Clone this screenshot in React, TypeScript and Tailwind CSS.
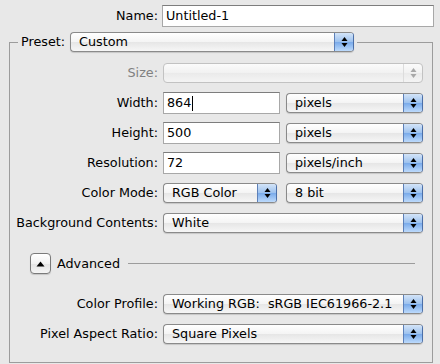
import React from 'react';

const Arrows = ({ color = '#000' }: { color?: string }) => (
  <svg width="7" height="12" viewBox="0 0 7 12">
    <path d="M3.5 1 L6.5 5 L0.5 5 Z" fill={color} />
    <path d="M0.5 7 L6.5 7 L3.5 11 Z" fill={color} />
  </svg>
);

interface PopupProps {
  value: string;
  width: string;
  disabled?: boolean;
}

const Popup: React.FC<PopupProps> = ({ value, width, disabled }) => {
  if (disabled) {
    return (
      <div
        className={`${width} h-[20px] flex items-center rounded-[4px] border border-[#c2c2c2] bg-[linear-gradient(to_bottom,#fbfbfb_0%,#f1f1f1_50%,#eaeaea_51%,#f4f4f4_100%)]`}
      >
        <span className="flex-1" />
        <div className="w-[19px] h-full flex items-center justify-center border-l border-[#dcdcdc]">
          <Arrows color="#a8a8a8" />
        </div>
      </div>
    );
  }
  return (
    <div
      className={`${width} h-[20px] flex items-center rounded-[4px] border border-[#8a8a8a] border-r-[#4b6fa8] overflow-hidden shadow-[0_1px_1px_rgba(0,0,0,0.15)] bg-[linear-gradient(to_bottom,#ffffff_0%,#f4f4f4_50%,#e6e6e6_51%,#f6f6f6_100%)]`}
    >
      <span className="flex-1 pl-[8px] text-black whitespace-pre overflow-hidden">{value}</span>
      <div className="w-[19px] h-full flex items-center justify-center border-l border-[#5d80b8] bg-[linear-gradient(to_bottom,#d3e4f8_0%,#9cc1ee_50%,#79aaea_51%,#bcdafc_100%)]">
        <Arrows />
      </div>
    </div>
  );
};

const Field = ({ value, width, caret }: { value: string; width: string; caret?: boolean }) => (
  <div
    className={`${width} h-[22px] flex items-center bg-white border border-[#a8a8a8] border-t-[#7d7d7d] pl-[3px] text-black`}
  >
    <span>{value}</span>
    {caret && <span className="w-[1px] h-[15px] bg-black ml-[1px]" />}
  </div>
);

const Row = ({ label, children, dim }: { label: string; children: React.ReactNode; dim?: boolean }) => (
  <div className="flex items-center h-[30px]">
    <div className={`w-[148px] text-right whitespace-nowrap ${dim ? 'text-[#808080]' : 'text-black'}`}>{label}</div>
    <div className="ml-[5px] w-[260px] flex items-center">{children}</div>
  </div>
);

export default function App() {
  return (
    <div className="w-[440px] h-[364px] bg-[#e8e8e8] overflow-hidden font-['DejaVu_Sans',sans-serif] text-[12.75px] text-black">
      {/* Name */}
      <div className="flex items-center h-[23px] mt-[4px]">
        <div className="w-[158px] text-right">Name:</div>
        <div className="ml-[4px]">
          <Field value="Untitled-1" width="w-[272px]" />
        </div>
      </div>

      {/* Preset group */}
      <fieldset className="mt-[5px] ml-[9px] w-[424px] border border-[#9c9c9c] pt-[6px] pb-[13px]">
        <legend className="ml-[8px] px-[3px]">
          <div className="flex items-center h-[20px]">
            <span>Preset:</span>
            <div className="ml-[5px]">
              <Popup value="Custom" width="w-[284px]" />
            </div>
          </div>
        </legend>

        <Row label="Size:" dim>
          <Popup value="" width="w-[260px]" disabled />
        </Row>
        <Row label="Width:">
          <Field value="864" width="w-[117px]" caret />
          <div className="ml-[6px]">
            <Popup value="pixels" width="w-[137px]" />
          </div>
        </Row>
        <Row label="Height:">
          <Field value="500" width="w-[117px]" />
          <div className="ml-[6px]">
            <Popup value="pixels" width="w-[137px]" />
          </div>
        </Row>
        <Row label="Resolution:">
          <Field value="72" width="w-[117px]" />
          <div className="ml-[6px]">
            <Popup value="pixels/inch" width="w-[137px]" />
          </div>
        </Row>
        <Row label="Color Mode:">
          <Popup value="RGB Color" width="w-[114px]" />
          <div className="ml-[9px]">
            <Popup value="8 bit" width="w-[137px]" />
          </div>
        </Row>
        <Row label="Background Contents:">
          <Popup value="White" width="w-[260px]" />
        </Row>

        {/* Advanced */}
        <div className="flex items-center h-[51px] ml-[20px] mr-[17px]">
          <div className="w-[21px] h-[21px] rounded-[4px] border border-[#7a7a7a] flex items-center justify-center shadow-[0_1px_1px_rgba(0,0,0,0.15)] bg-[linear-gradient(to_bottom,#ffffff_0%,#f2f2f2_50%,#e4e4e4_51%,#f5f5f5_100%)]">
            <svg width="9" height="6" viewBox="0 0 9 6">
              <path d="M4.5 0.5 L8.5 5.5 L0.5 5.5 Z" fill="#000" />
            </svg>
          </div>
          <span className="ml-[6px]">Advanced</span>
          <div className="flex-1 h-[1px] bg-[#9c9c9c] ml-[8px]" />
        </div>

        <Row label="Color Profile:">
          <Popup value="Working RGB:  sRGB IEC61966-2.1" width="w-[260px]" />
        </Row>
        <Row label="Pixel Aspect Ratio:">
          <Popup value="Square Pixels" width="w-[260px]" />
        </Row>
      </fieldset>
    </div>
  );
}
